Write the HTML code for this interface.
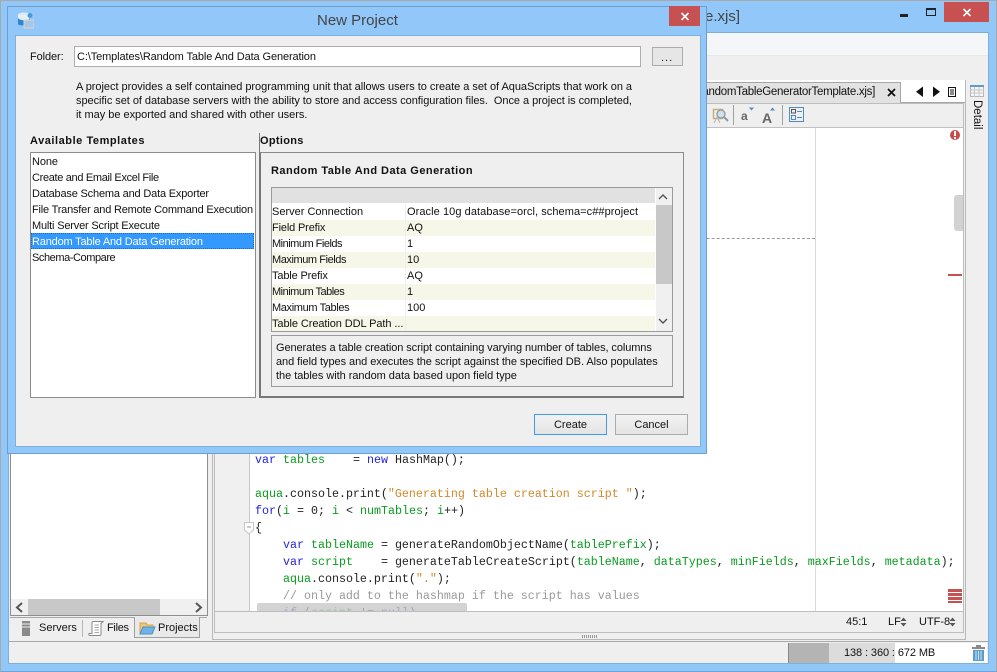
<!DOCTYPE html>
<html><head><meta charset="utf-8"><style>
html,body{margin:0;padding:0}
body{width:997px;height:672px;overflow:hidden;position:relative;background:#91c7f9;font-family:"Liberation Sans",sans-serif;font-size:11px;color:#111}
.a{position:absolute;box-sizing:border-box}
.t{position:absolute;white-space:nowrap;line-height:14px;height:14px}
.b{font-weight:bold}
.c{position:absolute;white-space:pre;font-family:"Liberation Mono",monospace;font-size:11.67px;line-height:14px;left:255px;color:#222}
.k{color:#2222dd}.g{color:#0a9a20}.o{color:#d08a2a}.m{color:#9a9a9a}.y{color:#8a9a10}
.r{position:absolute;left:272px;width:383px;height:16px}
</style></head><body>
<!-- main window -->
<div class="a" style="left:0;top:0;width:997px;height:672px;border:1px solid #a9a9a9;border-bottom-color:#6fa5d6;border-right-color:#a9a9a9"></div>
<div class="a" style="left:8px;top:32px;width:981px;height:632px;background:#efefef;border:1px solid #7fb0dc"></div>
<div class="a" style="left:9px;top:33px;width:979px;height:23px;background:#f5f6f7;border-bottom:1px solid #e6e6e8"></div>
<div class="t" style="left:705px;top:8px;font-size:15px;line-height:18px;height:18px;color:#444">e.xjs]</div>
<div class="a" style="left:900px;top:14px;width:8px;height:3px;background:#222"></div>
<div class="a" style="left:926px;top:8px;width:10px;height:8px;border:1px solid #222;border-top-width:2px"></div>
<div class="a" style="left:944px;top:2px;width:45px;height:20px;background:#c75050"></div>
<svg class="a" style="left:962px;top:8px" width="10" height="9"><path d="M1.5 1L8.500 8M8.500 1L1.500 8" stroke="#fff" stroke-width="1.600"/></svg>
<!-- left panel -->
<div class="a" style="left:10px;top:440px;width:198px;height:176px;background:#fff;border:1px solid #8e8e8e"></div>
<div class="a" style="left:11px;top:599px;width:196px;height:16px;background:#f0f0f0"></div>
<div class="a" style="left:28px;top:599px;width:132px;height:16px;background:#c8c8c8"></div>
<svg class="a" style="left:14px;top:602px" width="196" height="11" fill="none" stroke="#555" stroke-width="2"><path d="M8 1L3 5.500L8 10"/><path d="M182 1L187 5.500L182 10"/></svg>
<div class="a" style="left:10px;top:617px;width:125px;height:1px;background:#a8a8a8"></div>
<div class="a" style="left:200px;top:617px;width:7px;height:1px;background:#a8a8a8"></div>
<div class="a" style="left:134px;top:617px;width:66px;height:21px;background:#e9e9e9;border:1px solid #a0a0a0;border-top:none"></div>
<div class="a" style="left:9px;top:641px;width:204px;height:1px;background:#a8a8a8"></div>
<svg class="a" style="left:20px;top:620px" width="14" height="17"><rect x="2" y="1" width="8" height="15" fill="#8a8a8a"/><path d="M2 4h8M2 7h8" stroke="#eee"/><rect x="7" y="11" width="1" height="1" fill="#2c2"/></svg>
<div class="t" style="left:39px;top:621px">Servers</div>
<div class="a" style="left:82px;top:620px;width:1px;height:17px;background:#b5b5b5"></div>
<svg class="a" style="left:88px;top:620px" width="16" height="17" fill="#fff" stroke="#8a8a8a"><path d="M5 1.500H15L13 3.500V14.500C13 15.500 12 15.500 11 15.500H2C1 15.500 .5 14.500 1 13.500H4V3C4 2 4.500 1.500 5 1.500Z"/><path d="M6.500 5H11M6.500 7.500H11M6.500 10H11M6.500 12.500H11" stroke-width=".8"/></svg>
<div class="t" style="left:107px;top:621px;letter-spacing:-.3px">Files</div>
<svg class="a" style="left:139px;top:621px" width="17" height="15"><path d="M1 2H7L8 4H14V12H1Z" fill="#edc776" stroke="#d2a24a"/><path d="M1 13L4 6H16L13 13Z" fill="#6fb4e6" stroke="#4d92c8"/></svg>
<div class="t" style="left:158px;top:621px">Projects</div>
<!-- editor frame -->
<div class="a" style="left:212px;top:80px;width:754px;height:560px;border:1px solid #b8b8b8;background:#efefef"></div>
<div class="a" style="left:214px;top:103px;width:750px;height:530px;border:1px solid #bdbdbd;background:#efefef"></div>
<div class="a" style="left:690px;top:80px;width:275px;height:22px;background:#fff"></div>
<div class="a" style="left:690px;top:82px;width:211px;height:21px;background:#e2e2e2;border:1px solid #a6a6a6;border-bottom:none;border-left:none"></div>
<div class="a" style="left:900px;top:102px;width:65px;height:1px;background:#a6a6a6"></div>
<div class="t" style="left:705px;top:85px;font-size:11.500px;letter-spacing:-.28px;width:170px;overflow:hidden;direction:rtl;text-align:right"><span style="direction:ltr;unicode-bidi:embed">RandomTableGeneratorTemplate.xjs]</span></div>
<svg class="a" style="left:886px;top:87px" width="11" height="11"><path d="M2 2L9 9M9 2L2 9" stroke="#111" stroke-width="1.800"/></svg>
<svg class="a" style="left:915px;top:85px" width="48" height="14"><path d="M8 1.500V12L1 6.800Z M18 1.500V12L25 6.800Z" fill="#111"/><rect x="33.500" y="2.500" width="7" height="9" fill="none" stroke="#111"/><path d="M35 5H39M35 7H39M35 9H39" stroke="#111"/></svg>
<!-- toolbar -->
<svg class="a" style="left:712px;top:107px" width="18" height="18" fill="none"><rect x="1.500" y="2.500" width="9" height="9" stroke="#d0ad7c" stroke-width="1.500"/><circle cx="9" cy="7" r="4" fill="#cfe1ee" stroke="#8a9aa5" stroke-width="1.300"/><path d="M12 10L16 14" stroke="#8a9aa5" stroke-width="2"/><path d="M2 16L5 10L8 16" stroke="#b5b5b5"/></svg>
<div class="a" style="left:733px;top:105px;width:1px;height:20px;background:#a0a0a0"></div>
<div class="t b" style="left:741px;top:109px;font-size:12px;color:#666">a</div>
<svg class="a" style="left:748px;top:107px" width="7" height="5"><path d="M1 .5H6L3.500 3.500Z" fill="#4f8bc2"/></svg>
<div class="t b" style="left:762px;top:111px;font-size:14px;color:#666">A</div>
<svg class="a" style="left:769px;top:107px" width="7" height="5"><path d="M1 3.500H6L3.500 .5Z" fill="#4f8bc2"/></svg>
<div class="a" style="left:782px;top:105px;width:1px;height:20px;background:#a0a0a0"></div>
<svg class="a" style="left:789px;top:107px" width="16" height="16" fill="none" stroke="#4f8bbd"><rect x=".5" y=".5" width="14" height="14"/><rect x="2.500" y="2.500" width="4" height="3.500" stroke="#555"/><rect x="2.500" y="8.500" width="4" height="4"/><path d="M8 4.500H13M8 10.500H13"/></svg>
<!-- detail -->
<svg class="a" style="left:970px;top:85px" width="15" height="12"><rect x=".5" y=".5" width="13" height="11" fill="#f5f5f5" stroke="#b5b5b5"/><rect x="0" y="0" width="14" height="2" fill="#5d9bd0"/><path d="M0 5H14M0 8H14M4.500 2V12M9 2V12" stroke="#c8c8c8"/></svg>
<div class="t" style="left:963px;top:107px;transform:rotate(90deg);width:28px;text-align:center;font-size:11.500px">Detail</div>
<!-- editor -->
<div class="a" style="left:215px;top:127px;width:748px;height:484px;background:#fff;border-top:1px solid #c0c0c0;overflow:hidden">
<div class="a" style="left:0;top:0;height:484px;background:#f0f0f0;border-right:1px solid #c8c8c8;width:35px"></div>
<div class="a" style="left:600px;top:0;width:1px;height:484px;background:#dadada"></div>
<div class="a" style="left:0;top:110px;width:600px;height:0;border-top:1px dashed #999"></div>
<div class="a" style="left:739px;top:67px;width:9px;height:36px;background:#d2d2d2;border-radius:3px 0 0 3px"></div>
<div class="a" style="left:733px;top:146px;width:14px;height:2px;background:#c75050"></div>
<div class="a" style="left:733px;top:461px;width:14px;height:3px;background:#c75050"></div>
<div class="a" style="left:733px;top:465px;width:14px;height:3px;background:#c75050"></div>
<div class="a" style="left:733px;top:469px;width:14px;height:3px;background:#c75050"></div>
<div class="a" style="left:733px;top:473px;width:14px;height:2px;background:#c75050"></div>
<div class="a" style="left:735px;top:2px;width:10px;height:10px;border-radius:5px;background:#c84b4b"></div>
<div class="a" style="left:739px;top:3px;width:2px;height:5px;background:#fff"></div>
<div class="a" style="left:739px;top:9px;width:2px;height:2px;background:#fff"></div>
<div class="c" style="left:40px;top:325px"><span class="k">var</span> <span class="g">tables</span>    = <span class="k">new</span> HashMap();</div>
<div class="c" style="left:40px;top:359px"><span class="g">aqua</span>.console.print(<span class="o">"Generating table creation script "</span>);</div>
<div class="c" style="left:40px;top:376px"><span class="k">for</span>(<span class="g">i</span> = 0; <span class="g">i</span> &lt; <span class="g">numTables</span>; <span class="g">i</span>++)</div>
<div class="c" style="left:40px;top:393px">{</div>
<div class="c" style="left:40px;top:410px">    <span class="k">var</span> <span class="g">tableName</span> = generateRandomObjectName(<span class="g">tablePrefix</span>);</div>
<div class="c" style="left:40px;top:427px">    <span class="k">var</span> <span class="g">script</span>    = generateTableCreateScript(<span class="g">tableName</span>, <span class="g">dataTypes</span>, <span class="g">minFields</span>, <span class="g">maxFields</span>, <span class="g">metadata</span>);</div>
<div class="c" style="left:40px;top:444px">    <span class="g">aqua</span>.console.print(<span class="o">"."</span>);</div>
<div class="c m" style="left:40px;top:461px">    // only add to the hashmap if the script has values</div>
<div class="c" style="left:40px;top:478px">    <span class="k">if</span> (<span class="g">script</span> != <span class="k">null</span>)</div>
<div class="a" style="left:42px;top:475px;width:210px;height:9px;background:#c8c8c8;opacity:.8;border-radius:2px 2px 0 0"></div>
</div>
<svg class="a" style="left:244px;top:522px" width="11" height="13"><path d="M.5 .5H9.500V8L5 12L.5 8Z" fill="#fff" stroke="#c5c5c5"/><path d="M3 5H7" stroke="#999"/></svg>
<!-- editor status -->
<div class="a" style="left:215px;top:611px;width:748px;height:1px;background:#bdbdbd"></div>
<div class="t" style="left:846px;top:615px">45:1</div>
<div class="t" style="left:888px;top:615px">LF</div>
<div class="t" style="left:919px;top:615px">UTF-8</div>
<svg class="a" style="left:900px;top:617px" width="7" height="10" fill="#555"><path d="M.5 4L3.500 .5L6.500 4ZM.5 6L3.500 9.500L6.500 6Z"/></svg>
<svg class="a" style="left:949px;top:617px" width="7" height="10" fill="#555"><path d="M.5 4L3.500 .5L6.500 4ZM.5 6L3.500 9.500L6.500 6Z"/></svg>
<div class="a" style="left:582px;top:635px;width:15px;height:3px;background:repeating-linear-gradient(90deg,#999 0 1px,transparent 1px 2px)"></div>
<!-- status bar -->
<div class="a" style="left:213px;top:641px;width:775px;height:1px;background:#a8a8a8"></div>
<div class="a" style="left:788px;top:643px;width:199px;height:20px;background:#fff;border-left:1px solid #888"></div>
<div class="a" style="left:789px;top:643px;width:40px;height:20px;background:#b4b4b4"></div>
<div class="a" style="left:829px;top:643px;width:66px;height:20px;background:#dcdcdc"></div>
<div class="t" style="left:844px;top:646px;letter-spacing:-.1px">138 : 360 : 672 MB</div>
<svg class="a" style="left:971px;top:644px" width="16" height="18"><path d="M1 4H14" stroke="#8a8a8a" stroke-width="2"/><path d="M5 2H10" stroke="#8a8a8a" stroke-width="2"/><path d="M2 6H13V17H2Z" fill="#5c9ccb"/><path d="M5 7V16M7.500 7V16M10 7V16" stroke="#cfe4f3"/></svg>
<!-- dialog -->
<div class="a" style="left:7px;top:6px;width:700px;height:448px;background:#91c7f9;border:1px solid #6e9fcc"></div>
<div class="a" style="left:15px;top:35px;width:686px;height:412px;background:#efefef;border:1px solid #7fb0dc"></div>
<div class="a" style="left:669px;top:6px;width:31px;height:20px;background:#c75050"></div>
<svg class="a" style="left:680px;top:12px" width="10" height="9"><path d="M1.500 1L8.500 8M8.500 1L1.500 8" stroke="#fff" stroke-width="1.600"/></svg>
<svg class="a" style="left:17px;top:12px" width="17" height="17"><ellipse cx="7" cy="3" rx="6" ry="2.500" fill="#dfeaf4"/><path d="M1 3V12C1 14 13 14 13 12V3Z" fill="#2d86d2"/><path d="M1 6C3 9 11 9 13 6V3H1Z" fill="#e7eff6"/><circle cx="13" cy="3.500" r="2.500" fill="#4a9bdc"/><rect x="7" y="8" width="10" height="8" fill="#a9c6e2" stroke="#d7d7d7"/></svg>
<div class="t" style="left:317px;top:11px;font-size:15px;line-height:19px;height:19px;color:#444">New Project</div>
<div class="t" style="left:30px;top:50px;letter-spacing:-.1px">Folder:</div>
<div class="a" style="left:74px;top:46px;width:567px;height:21px;background:#fff;border:1px solid #adadad"></div>
<div class="t" style="left:77px;top:50px;letter-spacing:-.11px">C:\Templates\Random Table And Data Generation</div>
<div class="a" style="left:652px;top:47px;width:31px;height:19px;background:#e6e6e6;border:1px solid #acacac"></div>
<div class="t" style="left:661px;top:51px;letter-spacing:1px">...</div>
<div class="t" style="left:76px;top:80px;letter-spacing:-.035px">A project provides a self contained programming unit that allows users to create a set of AquaScripts that work on a</div>
<div class="t" style="left:76px;top:94px;letter-spacing:-.05px">specific set of database servers with the ability to store and access configuration files.&nbsp; Once a project is completed,</div>
<div class="t" style="left:76px;top:108px;letter-spacing:-.02px">it may be exported and shared with other users.</div>
<div class="t b" style="left:30px;top:134px;letter-spacing:.55px">Available Templates</div>
<div class="t b" style="left:260px;top:134px;letter-spacing:.3px">Options</div>
<div class="a" style="left:259px;top:133px;width:1px;height:20px;background:#777"></div>
<div class="a" style="left:30px;top:152px;width:226px;height:246px;background:#fff;border:1px solid #8a8a8a"></div>
<div class="a" style="left:31px;top:233px;width:223px;height:16px;background:#3399ff;border:1px dotted #1d6fc0"></div>
<div class="t" style="left:32px;top:155px;letter-spacing:-.1px">None</div>
<div class="t" style="left:32px;top:171px;letter-spacing:-.33px">Create and Email Excel File</div>
<div class="t" style="left:32px;top:187px;letter-spacing:-.18px">Database Schema and Data Exporter</div>
<div class="t" style="left:32px;top:203px;letter-spacing:-.2px">File Transfer and Remote Command Execution</div>
<div class="t" style="left:32px;top:219px;letter-spacing:-.18px">Multi Server Script Execute</div>
<div class="t" style="left:32px;top:235px;color:#fff;letter-spacing:-.18px">Random Table And Data Generation</div>
<div class="t" style="left:32px;top:251px;letter-spacing:-.43px">Schema-Compare</div>
<div class="a" style="left:259px;top:152px;width:425px;height:246px;border:1px solid #8a8a8a;border-left:2px solid #777;border-bottom:2px solid #777"></div>
<div class="t b" style="left:271px;top:164px;letter-spacing:.47px">Random Table And Data Generation</div>
<div class="a" style="left:271px;top:187px;width:402px;height:145px;background:#fff;border:1px solid #9a9a9a"></div>
<div class="a" style="left:272px;top:188px;width:383px;height:15px;background:#e1e1e1"></div>
<div class="r" style="top:220px;background:#f7f7e9"></div>
<div class="r" style="top:252px;background:#f7f7e9"></div>
<div class="r" style="top:284px;background:#f7f7e9"></div>
<div class="r" style="top:316px;height:15px;background:#f7f7e9"></div>
<div class="a" style="left:405px;top:204px;width:1px;height:127px;background:#eeeeee"></div>
<div class="a" style="left:656px;top:188px;width:16px;height:143px;background:#f0f0f0"></div>
<div class="a" style="left:656px;top:205px;width:16px;height:79px;background:#c8c8c8"></div>
<svg class="a" style="left:657px;top:193px" width="12" height="136" fill="none" stroke="#555" stroke-width="1.400"><path d="M2 6L6 2L10 6"/><path d="M2 126L6 130L10 126"/></svg>
<div class="t" style="left:272px;top:205px">Server Connection</div><div class="t" style="left:407px;top:205px;letter-spacing:.07px">Oracle 10g database=orcl, schema=c##project</div>
<div class="t" style="left:272px;top:221px;letter-spacing:-.15px">Field Prefix</div><div class="t" style="left:407px;top:221px">AQ</div>
<div class="t" style="left:272px;top:237px;letter-spacing:-.5px">Minimum Fields</div><div class="t" style="left:407px;top:237px">1</div>
<div class="t" style="left:272px;top:253px;letter-spacing:-.43px">Maximum Fields</div><div class="t" style="left:407px;top:253px">10</div>
<div class="t" style="left:272px;top:269px;letter-spacing:-.15px">Table Prefix</div><div class="t" style="left:407px;top:269px">AQ</div>
<div class="t" style="left:272px;top:285px;letter-spacing:-.5px">Minimum Tables</div><div class="t" style="left:407px;top:285px">1</div>
<div class="t" style="left:272px;top:301px;letter-spacing:-.36px">Maximum Tables</div><div class="t" style="left:407px;top:301px">100</div>
<div class="t" style="left:272px;top:317px;letter-spacing:-.08px">Table Creation DDL Path ...</div>
<div class="a" style="left:271px;top:335px;width:402px;height:52px;border:1px solid #9a9a9a"></div>
<div class="t" style="left:276px;top:341px;letter-spacing:-.09px">Generates a table creation script containing varying number of tables, columns</div>
<div class="t" style="left:276px;top:355px;letter-spacing:-.06px">and field types and executes the script against the specified DB. Also populates</div>
<div class="t" style="left:276px;top:369px;letter-spacing:-.04px">the tables with random data based upon field type</div>
<div class="a" style="left:534px;top:414px;width:73px;height:21px;background:linear-gradient(#f2f2f2,#e4e4e4);border:1px solid #3f9bf0"></div>
<div class="t" style="left:534px;top:418px;width:73px;text-align:center">Create</div>
<div class="a" style="left:615px;top:414px;width:73px;height:21px;background:linear-gradient(#f2f2f2,#e4e4e4);border:1px solid #acacac"></div>
<div class="t" style="left:615px;top:418px;width:73px;text-align:center">Cancel</div>
</body></html>
